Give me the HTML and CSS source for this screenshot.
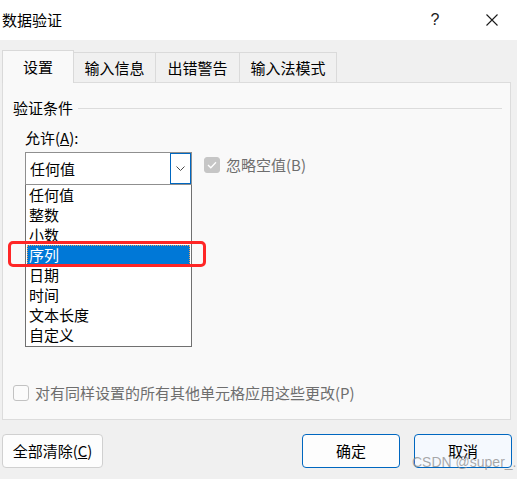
FILE: index.html
```html
<!DOCTYPE html>
<html lang="zh-CN">
<head>
<meta charset="utf-8">
<title>数据验证</title>
<link rel="stylesheet" href="styles.css">
</head>
<body>
<div class="dialog">
  <div class="titlebar">
    <span class="title">数据验证</span>
    <span class="help">?</span>
    <span class="close">
      <svg width="12" height="12" viewBox="0 0 12 12"><path d="M0.5 0.5 L11.5 11.5 M11.5 0.5 L0.5 11.5" stroke="#1a1a1a" stroke-width="1.1" fill="none"/></svg>
    </span>
  </div>

  <div class="tabs">
    <div class="tab active">设置</div>
    <div class="tab tab-2">输入信息</div>
    <div class="tab tab-3">出错警告</div>
    <div class="tab tab-4">输入法模式</div>
  </div>

  <div class="panel">
    <div class="legend"><span class="legend-text">验证条件</span><span class="rule"></span></div>
    <div class="label">允许(<u>A</u>):</div>
    <div class="row">
      <div class="combo-col">
        <div class="combo">
          <span class="combo-text">任何值</span>
          <span class="combo-btn">
            <svg width="9" height="5" viewBox="0 0 9 5"><path d="M0.5 0.5 L4.5 4.5 L8.5 0.5" stroke="#4a4a4a" stroke-width="1" fill="none"/></svg>
          </span>
        </div>
        <ul class="list">
          <li>任何值</li>
          <li>整数</li>
          <li>小数</li>
          <li class="selected">序列</li>
          <li>日期</li>
          <li>时间</li>
          <li>文本长度</li>
          <li>自定义</li>
        </ul>
      </div>
      <div class="check disabled">
        <span class="box checked">
          <svg width="10" height="8" viewBox="0 0 10 8"><path d="M1 4 L3.8 6.8 L9 1.2" stroke="#ffffff" stroke-width="1.3" fill="none"/></svg>
        </span>
        <span class="check-text">忽略空值(B)</span>
      </div>
    </div>
    <div class="check apply">
      <span class="box"></span>
      <span class="check-text">对有同样设置的所有其他单元格应用这些更改(P)</span>
    </div>
  </div>

  <div class="buttons">
    <button class="btn clear">全部清除(<u>C</u>)</button>
    <span class="spacer"></span>
    <button class="btn primary">确定</button>
    <button class="btn primary cancel">取消</button>
  </div>

  <div class="marker"></div>
  <div class="watermark">CSDN @super_.</div>
</div>
</body>
</html>
```

FILE: styles.css
```css
* {
  box-sizing: border-box;
}

html, body {
  margin: 0;
  padding: 0;
}

body {
  width: 517px;
  height: 479px;
  overflow: hidden;
  background: #f0f0f0;
  font-family: "Noto Sans CJK SC", "Noto Sans", sans-serif;
  font-size: 15px;
  color: #000;
}

.dialog {
  position: relative;
  width: 517px;
  height: 479px;
}

/* title bar */
.titlebar {
  height: 40px;
  background: #ffffff;
  display: flex;
  align-items: center;
  padding-left: 2px;
}

.title {
  line-height: 20px;
  flex: 1;
}

.help {
  width: 46px;
  text-align: center;
  font-family: "Liberation Sans", sans-serif;
  font-size: 16px;
  color: #1a1a1a;
  line-height: 20px;
  margin-right: 11px;
}

.close {
  width: 46px;
  margin-right: 2px;
  display: flex;
  justify-content: center;
  align-items: center;
  height: 20px;
}

/* tabs */
.tabs {
  margin-top: 10px;
  padding-left: 2px;
  height: 32px;
  display: flex;
  align-items: flex-end;
  position: relative;
  z-index: 1;
}

.tab {
  height: 30px;
  line-height: 29px;
  text-align: center;
  background: #f0f0f0;
  border-top: 1px solid #dadada;
  border-right: 1px solid #dadada;
}

.tab.active {
  width: 72px;
  height: 33px;
  line-height: 32px;
  margin-bottom: -1px;
  background: #f9f9f9;
  border: 1px solid #d9d9d9;
  border-bottom: none;
}

.tab-2 { width: 82px; }
.tab-3 { width: 84px; }
.tab-4 { width: 97px; }

/* panel */
.panel {
  margin-left: 2px;
  width: 509px;
  height: 338px;
  background: #f9f9f9;
  border: 1px solid #dcdcdc;
  padding: 15px 8px 0 10px;
}

.legend {
  display: flex;
  align-items: center;
  height: 20px;
  line-height: 20px;
}

.rule {
  flex: 1;
  height: 1px;
  background: #dcdcdc;
  margin-left: 5px;
}

.label {
  margin-top: 10px;
  padding-left: 12px;
  height: 20px;
  line-height: 20px;
}

.row {
  margin-top: 4px;
  padding-left: 12px;
  display: flex;
  align-items: flex-start;
}

.combo-col {
  width: 167px;
}

.combo {
  height: 33px;
  border: 1px solid #8f8f8f;
  background: #ffffff;
  display: flex;
  align-items: stretch;
}

.combo-text {
  flex: 1;
  padding-left: 4px;
  line-height: 31px;
}

.combo-btn {
  width: 21px;
  border: 1px solid #0067c0;
  display: flex;
  justify-content: center;
  align-items: center;
}

.list {
  list-style: none;
  margin: 0;
  padding: 0 1px;
  height: 162px;
  background: #ffffff;
  border: 1px solid #707070;
  border-top: none;
}

.list li {
  height: 20px;
  line-height: 20px;
  padding-left: 2px;
}

.list li.selected {
  background: #0078d7;
  color: #ffffff;
  outline: 1px dotted #e8a060;
  outline-offset: -1px;
}

.check {
  display: flex;
  align-items: center;
  height: 20px;
  line-height: 20px;
}

.check .box {
  width: 16px;
  height: 16px;
  border-radius: 3px;
  border: 1px solid #c2c2c2;
  background: #fbfbfb;
  display: flex;
  justify-content: center;
  align-items: center;
  margin-right: 6px;
}

.check .box.checked {
  background: #c6c6c6;
  border-color: #c6c6c6;
}

.check.disabled .check-text,
.check.apply .check-text {
  color: #6e6e6e;
}

.check.disabled {
  margin-left: 12px;
  margin-top: 3px;
}

.check.apply {
  margin-top: 36px;
}

/* buttons */
.buttons {
  margin-top: 14px;
  padding: 0 5px 0 2px;
  display: flex;
  align-items: center;
  gap: 14px;
}

.spacer {
  flex: 1;
}

.btn {
  height: 34px;
  width: 98px;
  font-family: inherit;
  font-size: 15px;
  color: #000;
  background: #fdfdfd;
  border: 1px solid #d0d0d0;
  border-radius: 4px;
  padding: 0;
  line-height: 20px;
}

.btn.clear {
  width: 101px;
}

.btn.primary {
  border-color: #0067c0;
}

.btn.cancel {
  background: #f5f9fe;
}

/* overlays */
.marker {
  position: absolute;
  left: 8px;
  top: 241px;
  width: 198px;
  height: 26px;
  border: 3px solid #ff2626;
  border-radius: 5px;
}

.watermark {
  position: absolute;
  left: 412px;
  top: 454px;
  font-family: "Liberation Sans", sans-serif;
  font-size: 14px;
  line-height: 16px;
  color: rgba(140, 140, 140, 0.75);
}
```
